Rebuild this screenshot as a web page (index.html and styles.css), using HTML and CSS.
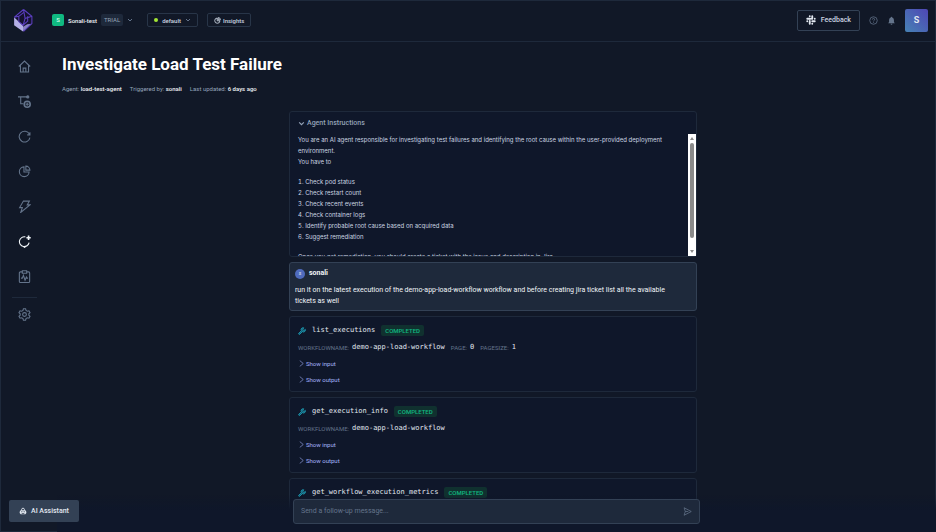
FILE: index.html
```
<!DOCTYPE html>
<html lang="en">
<head>
  <meta charset="UTF-8">
  <meta name="viewport" content="width=device-width, initial-scale=1.0">
  <title>Investigate Load Test Failure</title>
  <link rel="stylesheet" href="styles.css">
</head>
<body>
  <svg class="sprite" aria-hidden="true">
    <symbol id="chevron" viewBox="0 0 12 12"><path d="M2 4l4 4 4-4"/></symbol>
    <symbol id="chevron-right" viewBox="0 0 12 12"><path d="M3 1l6 5-6 5"/></symbol>
    <symbol id="pie" viewBox="0 0 24 24"><path d="M11 3.500A9 9 0 1 0 20.500 13H11z"/><path d="M14.500 2v7.500H22A7.500 7.500 0 0 0 14.500 2z"/></symbol>
    <symbol id="wrench" viewBox="0 0 24 24"><path d="M10 11L2.500 18.500a2.100 2.100 0 0 0 3 3L13 14a6 6 0 0 0 9-7l-4 3.500-4-3.500 3.500-4.500A6 6 0 0 0 10 11z"/></symbol>
  </svg>

  <header class="topbar">
    <a class="logo" href="#" aria-label="Home">
      <svg viewBox="0 0 36 44">
        <path d="M19 1L35 14V28L19 43 1 31V16z" fill="#15122f"/>
        <path d="M1 16L18 32V43L1 31z" fill="#b4afe6"/>
        <path d="M18 43V34l8-5 9-1z" fill="#8781c0"/>
        <path d="M19 1L35 14V28L19 43M19 1L1 16M35 14L22 18 18 32M19 1l3 17M1 16l9-2 9-7M10 14v10l8 7 9-8V14" fill="none" stroke="#5b3fc0" stroke-width="2"/>
      </svg>
    </a>
    <button class="account" type="button">
      <span class="account-badge">S</span>
      <span class="account-name">Sonali-test</span>
      <span class="tag">TRIAL</span>
      <svg class="icon caret"><use href="#chevron"/></svg>
    </button>
    <button class="pill env" type="button">
      <span class="dot"></span>default
      <svg class="icon caret"><use href="#chevron"/></svg>
    </button>
    <button class="pill insights" type="button">
      <svg class="icon"><use href="#pie"/></svg>Insights
    </button>
    <div class="topbar-right">
      <button class="feedback" type="button">
        <svg viewBox="0 0 24 24" fill="none" stroke="#e2e8f0" stroke-width="4.500" stroke-linecap="round">
          <path d="M9 3v0M3 9h6M9.500 9.500V9M15 3v6M21 9v0M9 15v6M3 15v0M15 15h6M15 21v0M3 9h7M14 9h1M9 14v1"/>
        </svg>
        Feedback
      </button>
      <button class="plain" type="button" aria-label="Help">
        <svg viewBox="0 0 24 24" fill="none" stroke="#64748b" stroke-width="2"><circle cx="12" cy="12" r="10"/><path d="M9 9.500a3 3 0 1 1 4 2.700c-.8.400-1 .8-1 2M12 16v2"/></svg>
      </button>
      <button class="plain" type="button" aria-label="Notifications">
        <svg viewBox="0 0 24 24" fill="#64748b"><path d="M12 2a2 2 0 0 0-2 2 6.500 6.500 0 0 0-4.500 6.500V16L3 19h18l-2.500-3v-5.500A6.500 6.500 0 0 0 14 4a2 2 0 0 0-2-2zM9.500 20.500a2.500 2.500 0 0 0 5 0z"/></svg>
      </button>
      <button class="avatar" type="button">S</button>
    </div>
  </header>

  <div class="layout">
    <nav class="sidebar" aria-label="Main">
      <a href="#" aria-label="Home"><svg viewBox="0 0 24 24"><path d="M1.500 12L12 2l10.500 10M4.500 10v12h15V10M9.500 22v-7h5v7"/></svg></a>
      <a href="#" aria-label="Workflows"><svg viewBox="0 0 24 24"><path d="M0 3.500h17M5 3.500V16h5"/><circle cx="18" cy="3.500" r="2" fill="currentColor"/><circle cx="17" cy="17" r="5.500" stroke-width="3"/><path d="M17 14v6M14 17h6"/></svg></a>
      <a href="#" aria-label="Executions"><svg viewBox="0 0 24 24"><path d="M21 7.500A10 10 0 1 0 22 14M22 4v5h-5"/></svg></a>
      <a href="#" aria-label="Insights"><svg viewBox="0 0 24 24"><use href="#pie"/></svg></a>
      <a href="#" aria-label="Triggers"><svg viewBox="0 0 24 24"><path d="M10 2h11l-4 7h5L5 23l3-9H3z"/></svg></a>
      <a class="active" href="#" aria-label="Agents"><svg viewBox="0 0 24 24"><path d="M13.500 3.500A9 9 0 1 0 20.500 14M10 21.500l2.500 1.500 1-3"/><path d="M19.500 1v8M15.500 5h8" stroke-width="3"/></svg></a>
      <a href="#" aria-label="Test reports"><svg viewBox="0 0 24 24"><path d="M8 3.500H4.500a2 2 0 0 0-2 2V21a2 2 0 0 0 2 2h15a2 2 0 0 0 2-2V5.500a2 2 0 0 0-2-2H16M8 1.500h8V6H8zM5.500 15H8l2-5 3 9 2.500-6 1 2h2"/></svg></a>
      <hr>
      <a href="#" aria-label="Settings"><svg viewBox="0 0 24 24"><path d="M10 1.500h4l.8 3 2.400 1.400 3-.8 2 3.400L20 10.700v2.600l2.200 2.200-2 3.400-3-.8-2.400 1.400-.8 3h-4l-.8-3-2.400-1.400-3 .8-2-3.400L4 13.300v-2.600L1.800 8.500l2-3.400 3 .8 2.400-1.400z"/><circle cx="12" cy="12" r="3.500"/></svg></a>
    </nav>

    <main>
      <h1>Investigate Load Test Failure</h1>
      <p class="meta">
        <span>Agent: <b>load-test-agent</b></span>
        <span>Triggered by: <b>sonali</b></span>
        <span>Last updated: <b>6 days ago</b></span>
      </p>

      <div class="thread">
        <section class="card instructions">
          <button class="toggle" type="button" aria-expanded="true">
            <svg class="icon"><use href="#chevron"/></svg>Agent Instructions
          </button>
          <div class="scroll-area">
            <div class="scroll-text">
              <p>You are an AI agent responsible for investigating test failures and identifying the root cause within the user-provided deployment environment.<br>You have to</p>
              <ol>
                <li>Check pod status</li>
                <li>Check restart count</li>
                <li>Check recent events</li>
                <li>Check container logs</li>
                <li>Identify probable root cause based on acquired data</li>
                <li>Suggest remediation</li>
              </ol>
              <p>Once you get remediation, you should create a ticket with the issue and description in Jira</p>
            </div>
            <div class="scrollbar" aria-hidden="true">
              <svg viewBox="0 0 8 8"><path d="M2 6l2-3 2 3z"/></svg>
              <span class="thumb"></span>
              <svg viewBox="0 0 8 8"><path d="M2 2l2 3 2-3z"/></svg>
            </div>
          </div>
        </section>

        <section class="card message">
          <h2><span class="user-badge">S</span>sonali</h2>
          <p>run it on the latest execution of the demo-app-load-workflow workflow and before creating jira ticket list all the available tickets as well</p>
        </section>

        <section class="card tool">
          <h3><svg class="wrench"><use href="#wrench"/></svg>list_executions <span class="status">COMPLETED</span></h3>
          <dl>
            <div><dt>WORKFLOWNAME:</dt><dd>demo-app-load-workflow</dd></div>
            <div><dt>PAGE:</dt><dd>0</dd></div>
            <div><dt>PAGESIZE:</dt><dd>1</dd></div>
          </dl>
          <button class="show" type="button"><svg class="icon"><use href="#chevron-right"/></svg>Show input</button>
          <button class="show" type="button"><svg class="icon"><use href="#chevron-right"/></svg>Show output</button>
        </section>

        <section class="card tool">
          <h3><svg class="wrench"><use href="#wrench"/></svg>get_execution_info <span class="status">COMPLETED</span></h3>
          <dl>
            <div><dt>WORKFLOWNAME:</dt><dd>demo-app-load-workflow</dd></div>
          </dl>
          <button class="show" type="button"><svg class="icon"><use href="#chevron-right"/></svg>Show input</button>
          <button class="show" type="button"><svg class="icon"><use href="#chevron-right"/></svg>Show output</button>
        </section>

        <section class="card tool">
          <h3><svg class="wrench"><use href="#wrench"/></svg>get_workflow_execution_metrics <span class="status">COMPLETED</span></h3>
          <dl></dl>
        </section>
      </div>
    </main>
  </div>

  <div class="composer-bar">
    <form class="composer">
      <input type="text" placeholder="Send a follow-up message..." aria-label="Follow-up message">
      <button type="submit" aria-label="Send">
        <svg viewBox="0 0 24 24"><path d="M3 2l19 10L3 22l3-10zM6 12h8"/></svg>
      </button>
    </form>
  </div>

  <button class="assistant" type="button">
    <svg viewBox="0 0 24 24"><path d="M12 2v5M7 12V9a5 5 0 0 1 10 0v3" fill="none" stroke="currentColor" stroke-width="2"/><path fill-rule="evenodd" d="M5 10h14l3 4v4l-3 4H5l-3-4v-4zM7 13v3h3v-3zM14 13v3h3v-3zM8 18v2h8v-2z"/></svg>
    AI Assistant
  </button>
</body>
</html>
```

FILE: styles.css
```
:root {
  --bg: #111827;
  --panel: #0f172a;
  --raised: #1e293b;
  --line: #1e293b;
  --line-strong: #334155;
  --muted: #64748b;
  --text: #cbd5e1;
  --bright: #f1f5f9;
}

* {
  box-sizing: border-box;
}

body {
  margin: 0;
  height: 100vh;
  display: flex;
  flex-direction: column;
  overflow: hidden;
  border: 1px solid var(--line);
  background: var(--bg);
  color: var(--text);
  font-family: Roboto, "Liberation Sans", sans-serif;
  font-size: 7px;
  line-height: 11px;
}

h1, h2, h3, p, ol, dl, dd {
  margin: 0;
  padding: 0;
}

button, input {
  font: inherit;
  color: inherit;
  background: none;
  border: 0;
  padding: 0;
}

button {
  display: flex;
  align-items: center;
  cursor: pointer;
}

svg {
  display: block;
  flex: none;
}

.sprite {
  position: absolute;
  width: 0;
  height: 0;
}

.icon {
  width: 7px;
  height: 7px;
  fill: none;
  stroke: currentColor;
  stroke-width: 2;
}

.caret {
  width: 6px;
  height: 6px;
  color: var(--muted);
}

/* top bar */
.topbar {
  flex: none;
  display: flex;
  align-items: center;
  height: 41px;
  padding: 0 7px 2px 12px;
  border-bottom: 1px solid var(--line);
  font-size: 6px;
  font-weight: 500;
}

.logo svg {
  width: 20px;
  height: 23px;
}

.account {
  margin-left: 19px;
  gap: 4px;
}

.account-badge {
  width: 12px;
  height: 12px;
  border-radius: 2px;
  background: #10b981;
  color: #d1fae5;
  line-height: 12px;
  text-align: center;
}

.account-name {
  color: var(--bright);
}

.tag {
  padding: 0 3px;
  border-radius: 2px;
  background: var(--raised);
  color: #94a3b8;
  line-height: 12px;
  font-weight: 400;
}

.pill {
  height: 14px;
  border: 1px solid #283548;
  border-radius: 2px;
  gap: 4px;
  padding: 0 6px;
}

.env {
  margin-left: 14px;
}

.insights {
  margin-left: 9px;
  gap: 2px;
}

.dot {
  width: 4px;
  height: 4px;
  border-radius: 50%;
  background: #a3e635;
}

.pill .icon:first-child {
  stroke-width: 3;
}

.topbar-right {
  display: flex;
  align-items: center;
  margin-left: auto;
}

.feedback {
  height: 21px;
  margin-right: 9px;
  padding: 0 8px;
  gap: 5px;
  border: 1px solid var(--line-strong);
  border-radius: 2px;
  font-size: 7px;
}

.feedback svg {
  width: 10px;
  height: 10px;
}

.plain {
  margin-right: 9px;
}

.plain svg {
  width: 9px;
  height: 9px;
}

.avatar {
  justify-content: center;
  width: 23px;
  height: 23px;
  border-radius: 2px;
  background: linear-gradient(45deg, #4682b4, #4f46b5);
  color: #e2e8f0;
  font-size: 9px;
  font-weight: 700;
}

/* side navigation */
.layout {
  flex: 1;
  min-height: 0;
  display: flex;
}

.sidebar {
  flex: none;
  display: flex;
  flex-direction: column;
  align-items: center;
  gap: 22px;
  width: 47px;
  padding-top: 18px;
}

.sidebar a {
  color: var(--muted);
}

.sidebar svg {
  width: 13px;
  height: 13px;
  fill: none;
  stroke: currentColor;
  stroke-width: 2;
}

.sidebar .active {
  color: var(--bright);
}

.sidebar hr {
  width: 25px;
  margin: -8px 0 -12px;
  border: 0;
  border-top: 1px solid var(--line);
}

/* page content */
main {
  flex: 1;
  min-width: 0;
  padding: 12px 11px 0 14px;
}

h1 {
  color: #fff;
  font-size: 17px;
  line-height: 20px;
  font-weight: 700;
}

.meta {
  display: flex;
  gap: 8px;
  margin-top: 9px;
  color: #94a3b8;
  font-size: 6px;
}

.meta b {
  color: var(--bright);
  font-weight: 500;
}

.thread {
  display: flex;
  flex-direction: column;
  gap: 5px;
  max-width: 408px;
  margin: 17px auto 0;
}

.card {
  border: 1px solid var(--line);
  border-radius: 3px;
  background: var(--panel);
}

.toggle {
  gap: 2px;
  padding: 6px 8px 5px;
  color: #94a3b8;
  font-weight: 500;
}

.scroll-area {
  display: flex;
  height: 122px;
  overflow: hidden;
}

.scroll-text {
  flex: 1;
  padding-left: 8px;
  font-family: Inter, Roboto, sans-serif;
  font-size: 6px;
}

.scroll-text ol {
  margin: 9px 0;
  list-style-position: inside;
}

.scrollbar {
  flex: none;
  display: flex;
  flex-direction: column;
  align-items: center;
  gap: 1px;
  width: 8px;
  background: #fff;
}

.scrollbar svg {
  width: 8px;
  height: 8px;
  fill: #8a8a8a;
}

.thumb {
  flex: none;
  width: 4px;
  height: 95px;
  margin-bottom: auto;
  border-radius: 2px;
  background: #8a8a8a;
}

.message {
  padding: 5px 16px 3px 5px;
  border-color: var(--line-strong);
  background: var(--raised);
  color: var(--bright);
}

.message h2 {
  display: flex;
  align-items: center;
  gap: 4px;
  margin-bottom: 6px;
  font-size: 7px;
  font-weight: 700;
}

.user-badge {
  width: 10px;
  height: 10px;
  border-radius: 50%;
  background: #4f6bbd;
  color: #cbd5e1;
  font-size: 4px;
  line-height: 10px;
  text-align: center;
}

.tool {
  padding: 8px 8px 1px;
}

.tool h3 {
  display: flex;
  align-items: center;
  gap: 6px;
  color: #e2e8f0;
  font-family: "DejaVu Sans Mono", monospace;
  font-size: 7px;
  font-weight: 400;
}

.wrench {
  width: 8px;
  height: 8px;
  fill: #155e75;
  stroke: #22b8cf;
  stroke-width: 2;
}

.status {
  padding: 0 4px;
  border-radius: 2px;
  background: #10312f;
  color: #10b981;
  font-family: Roboto, "Liberation Sans", sans-serif;
  font-size: 6px;
  font-weight: 500;
}

.tool dl {
  display: flex;
  gap: 6px;
  margin: 6px 0 5px;
}

.tool dl div {
  display: flex;
  gap: 3px;
}

.tool dt {
  color: var(--muted);
  font-size: 6px;
}

.tool dd {
  color: #e2e8f0;
  font-family: "DejaVu Sans Mono", monospace;
}

.show {
  gap: 1px;
  margin-bottom: 5px;
  color: #a5b4fc;
  font-size: 6px;
}

.show .icon {
  stroke-width: 1;
}

/* message box over the end of the thread */
.composer-bar {
  position: fixed;
  left: 57px;
  right: 0;
  bottom: 0;
  padding: 4px 0 8px;
  background: linear-gradient(transparent, var(--panel) 40%);
}

.composer {
  display: flex;
  align-items: center;
  max-width: 407px;
  height: 25px;
  margin: 0 auto;
  padding: 0 7px;
  border: 1px solid var(--line-strong);
  border-radius: 3px;
  background: var(--raised);
}

.composer input {
  flex: 1;
  outline: none;
}

.composer input::placeholder {
  color: var(--muted);
}

.composer svg {
  width: 9px;
  height: 9px;
  fill: none;
  stroke: var(--muted);
  stroke-width: 2;
}

.assistant {
  position: fixed;
  left: 9px;
  bottom: 10px;
  height: 22px;
  padding: 0 10px;
  gap: 4px;
  border-radius: 2px;
  background: #334155;
  color: #e2e8f0;
  font-weight: 500;
}

.assistant svg {
  width: 8px;
  height: 8px;
  fill: currentColor;
}
```
